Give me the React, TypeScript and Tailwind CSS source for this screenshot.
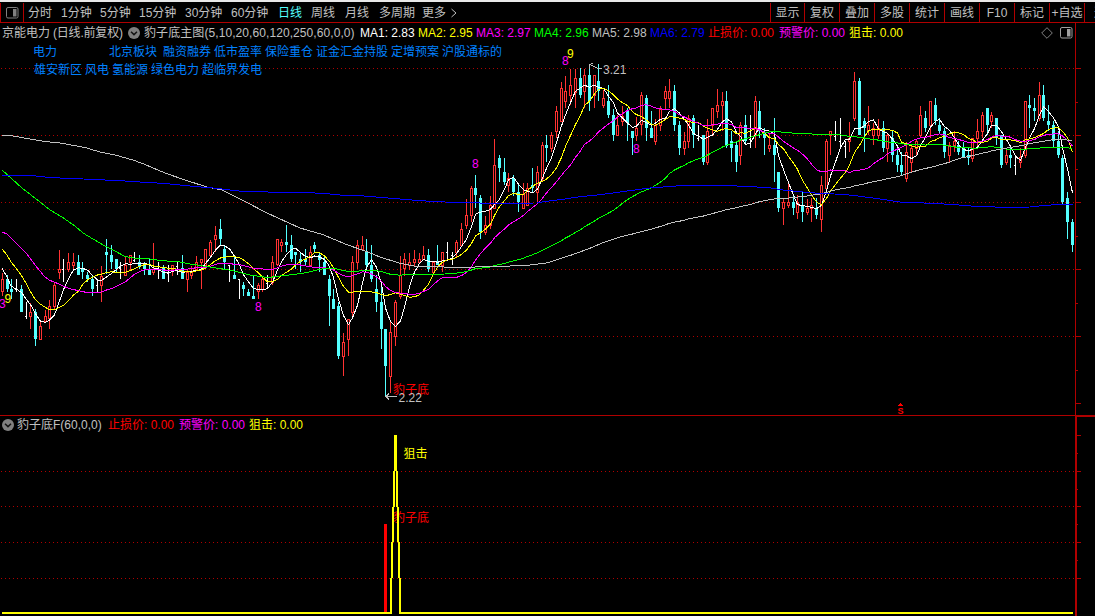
import React from "react";

type Point = [number, number];

// kind (r = rising, c = falling, w = unchanged), high, low, body top, body bottom
const CANDLES = `
r273,296,279,292 c275,292,279,289 c279,299,289,292 w279,292,289,289 c285,312,289,312 w302,319,316,316 r303,329,312,317
c309,346,312,339 r320,340,326,340 r310,322,316,322 r300,329,306,319 r282,309,285,307 r250,279,269,273 w259,282,269,269
r253,272,262,270 r253,270,262,266 c255,275,262,275 c262,279,268,272 c272,282,275,279 c275,296,279,289 w279,292,285,285
r266,302,276,286 c239,274,252,255 c245,269,255,262 c259,272,259,269 w262,279,268,268 r256,276,265,276 r255,271,255,263
w252,262,260,260 c255,269,262,266 c262,275,265,269 c259,275,269,275 r243,275,269,273 w262,279,268,268 c265,279,268,279
w265,282,273,273 r265,276,265,270 w262,275,266,266 c255,279,268,279 r270,292,272,280 r266,279,272,276 r256,271,262,270
r259,289,259,263 r249,269,249,266 r240,256,242,256 r226,252,235,240 c219,245,229,239 c245,269,249,262 w265,282,265,265
c255,279,275,279 w279,299,279,279 c282,296,285,289 c289,296,292,296 c275,299,296,299 r283,299,285,292 r276,292,279,290
w275,288,283,283 r256,285,262,283 r239,266,239,265 r239,252,242,246 c225,252,242,245 c235,262,245,259 c252,269,252,255
c252,272,259,262 c249,265,259,262 r246,266,252,266 c242,252,245,249 c252,272,255,260 c255,275,262,275 c275,326,279,296
c289,309,299,309 c302,359,306,356 r333,376,342,357 r319,356,319,340 r256,316,262,313 r240,269,245,263 r236,251,245,250
c239,269,251,265 c245,282,265,279 c275,312,289,302 c283,349,302,329 c329,396,329,366 r320,393,332,377 r300,346,302,337
r256,299,275,297 r253,276,259,269 r253,270,262,266 r250,267,259,263 r253,264,259,263 r246,260,255,260 c249,272,255,269
r262,274,262,273 c245,265,262,265 r252,272,252,266 w242,260,252,252 w252,265,255,255 r240,257,242,253 r223,246,229,246
r199,229,215,226 r186,222,188,216 c175,208,188,195 c195,239,198,232 r216,235,225,233 r196,229,205,226 r139,209,165,209
c155,182,158,168 c158,185,172,182 r173,192,178,186 c175,196,178,192 c184,212,192,202 r183,209,194,209 r183,206,188,206
c168,192,185,188 r166,202,172,193 r142,182,145,179 c135,162,145,148 r132,152,135,149 r106,138,111,132 r82,122,88,122
r76,108,91,102 r69,105,85,96 r69,108,78,93 c68,98,78,95 r69,108,75,92 c64,111,75,101 r75,108,75,96
c64,101,81,91 r90,108,98,106 c85,118,101,115 c109,141,115,135 r115,136,125,136 r106,126,116,122 c108,141,111,123
c131,155,131,138 r117,141,128,136 r92,135,95,125 c95,141,98,128 c111,138,128,138 r119,145,125,142 r106,131,109,126
r86,109,91,99 r79,108,91,99 c85,131,91,125 c121,155,125,148 r132,155,141,149 r115,148,118,142 c115,148,118,135
w125,141,138,138 c135,165,135,162 r119,165,131,163 r108,135,108,126 r89,118,105,112 r92,131,101,106 c91,148,101,146
c131,162,141,148 c142,172,145,162 r122,165,125,156 c115,144,125,141 w115,148,139,139 r96,148,101,136 c101,138,111,131
c128,155,132,138 r134,152,145,149 c118,182,145,155 c172,212,172,208 r198,225,202,209 r182,208,202,206 c194,215,202,208
r195,219,202,213 c192,222,205,212 r199,215,208,213 r198,222,205,209 c198,219,208,215 r176,232,185,220 r139,192,141,189
r131,155,131,136 w121,141,136,136 w118,147,141,141 w141,158,146,146 r122,152,138,142 r72,121,81,119 c78,135,81,135
c118,152,121,128 r106,135,125,131 r123,145,128,136 r119,139,128,136 c121,152,128,148 r134,162,135,149 c130,162,138,155
c145,172,155,165 c152,175,165,172 r142,182,152,179 r145,172,148,163 r139,155,141,149 r106,137,115,136 c111,132,118,128
r101,138,101,126 c98,125,105,121 c118,134,125,131 c128,158,131,152 r142,162,145,156 r131,152,141,146 c141,155,145,152
c142,157,148,157 c148,165,155,158 r138,162,138,159 r119,149,131,139 r112,138,115,132 c108,135,108,125 r112,128,115,122
c118,145,118,138 c135,168,135,165 r148,165,155,163 c148,168,155,158 w157,175,165,165 r148,168,157,163 r101,158,101,156
c95,128,105,108 c98,121,108,111 r82,121,95,119 c85,121,95,118 c105,131,121,125 c121,148,125,141 c131,158,141,155
c155,204,158,202 c192,239,198,222 c219,252,222,245`
  .trim()
  .split(/\s+/)
  .map((s, i) => {
    const [high, low, top, bottom] = s.slice(1).split(",").map(Number);
    const kind = s[0];
    return { kind, high, low, top, bottom, x: Math.floor(2.4 + i * 4.7345), close: kind === "c" ? bottom - 0.5 : top + 0.3 };
  });

function movingAverage(period: number, lead: Point[]): string {
  const points: Point[] = [...lead];
  for (let i = period - 1; i < CANDLES.length; i++) {
    let sum = 0;
    for (let k = i - period + 1; k <= i; k++) sum += CANDLES[k].close;
    points.push([CANDLES[i].x + 0.5, sum / period + 0.3]);
  }
  return toPoints(points);
}

function toPoints(points: Point[]): string {
  return points.map((p) => p.join(",")).join(" ");
}

const MA5 = movingAverage(5, [[2, 268], [7, 277], [11, 286], [16, 289]]);
const MA10 = movingAverage(10, [[2, 249], [7, 255], [11, 262], [16, 268], [21, 275], [26, 283], [30, 291], [35, 299], [40, 304]]);
const MA20 = movingAverage(20, [
  [2, 232], [7, 234], [11, 238], [16, 243], [21, 248], [26, 253], [30, 258], [35, 265], [40, 271], [44, 276],
  [49, 280], [54, 282], [59, 284], [63, 286], [68, 288], [73, 289.5], [78, 290.5], [82, 291.7], [87, 292.3],
]);
const MA60 = movingAverage(60, [
  [2, 170], [22, 188], [40, 202], [50, 210], [62, 217], [75, 226], [83, 233], [93, 239], [105, 246], [115, 251],
  [125, 256.5], [137, 258.5], [150, 259], [160, 260.5], [180, 262], [190, 264], [200, 265.5], [210, 267],
  [233, 270.7], [250, 275], [267, 277.5], [276, 276.7],
]);
const MA120 = movingAverage(120, [
  [2, 135], [10, 135.5], [30, 139], [45, 141.5], [60, 143], [85, 147.5], [100, 152], [115, 155], [133, 160],
  [145, 164.5], [165, 173], [185, 180], [207, 187], [222, 190], [242, 200], [267, 213], [300, 228], [323, 234.7],
  [347, 244.7], [367, 251.7], [380, 257], [400, 263.3], [417, 266.5], [460, 267.3], [500, 266.5], [530, 265], [548, 262.7],
]);
const MA250 = toPoints([
  [2, 175.5], [33, 175.7], [45, 177], [60, 178], [95, 179.5], [125, 181], [145, 182.3], [165, 183.5], [180, 185],
  [195, 186.5], [213, 188], [230, 190], [245, 191.7], [305, 192.5], [325, 193.5], [340, 195], [360, 195.7],
  [400, 199], [420, 200.7], [445, 202], [487, 203.2], [537, 203], [545, 201.5], [560, 199.7], [580, 196.7],
  [600, 194.7], [620, 192], [650, 188], [680, 185.7], [733, 185.7], [745, 186.7], [767, 187.3], [783, 190],
  [800, 191.7], [820, 193.5], [843, 194.3], [860, 196.3], [880, 199], [900, 202], [940, 203.7], [963, 205.3],
  [975, 206.3], [1003, 207.3], [1030, 207], [1045, 205.3], [1073, 204],
]);

const TOOLBAR = [
  { label: "分时", cls: "w-[33px]" },
  { label: "1分钟", cls: "w-[39px]" },
  { label: "5分钟", cls: "w-[39px]" },
  { label: "15分钟", cls: "w-[46px]" },
  { label: "30分钟", cls: "w-[46px]" },
  { label: "60分钟", cls: "w-[47px]" },
  { label: "日线", cls: "w-[33px] text-[#54ffff]" },
  { label: "周线", cls: "w-[34px]" },
  { label: "月线", cls: "w-[34px]" },
  { label: "多周期", cls: "w-[43px]" },
  { label: "更多", cls: "w-[27px]" },
];

const ACTIONS = ["显示", "复权", "叠加", "多股", "统计", "画线", "F10", "标记", "+自选"];

const READOUTS = [
  { label: "MA1: 2.83", cls: "w-[58px] text-white" },
  { label: "MA2: 2.95", cls: "w-[58px] text-[#ffff00]" },
  { label: "MA3: 2.97", cls: "w-[58px] text-[#ff00ff]" },
  { label: "MA4: 2.96", cls: "w-[58px] text-[#00ff00]" },
  { label: "MA5: 2.98", cls: "w-[58px] text-[#c0c0c0]" },
  { label: "MA6: 2.79", cls: "w-[58px] text-[#0000ff]" },
];

const SIGNALS = [
  { label: "止损价: 0.00", cls: "w-[71px] text-[#ff0000]" },
  { label: "预警价: 0.00", cls: "w-[70px] text-[#ff00ff]" },
  { label: "狙击: 0.00", cls: "text-[#ffff00]" },
];

function PanelIcon({ color }: { color: string }) {
  return (
    <svg width="13" height="12" viewBox="0 0 13 12" className="shrink-0">
      <rect x="0.5" y="0.5" width="11.5" height="10.5" rx="1.5" fill="none" stroke={color} />
      <rect x="7" y="2" width="3.5" height="7.5" fill={color} />
    </svg>
  );
}

function Expander() {
  return (
    <svg width="12" height="12" viewBox="0 0 12 12" className="shrink-0">
      <circle cx="6" cy="6" r="6" fill="#808080" />
      <path d="M3 4.8 L6 7.6 L9 4.8" fill="none" stroke="#141414" strokeWidth="1.5" />
    </svg>
  );
}

function Toolbar() {
  return (
    <nav className="flex h-[21px] shrink-0 border-b border-[#b00000] text-[#c0c0c0]">
      <div className="mt-px flex w-6 shrink-0 items-center justify-center border-x border-[#b00000]">
        <PanelIcon color="#808080" />
      </div>
      <div className="mt-px flex flex-1 items-center pl-1">
        {TOOLBAR.map((t) => (
          <span key={t.label} className={"shrink-0 " + t.cls}>{t.label}</span>
        ))}
        <svg width="8" height="10" viewBox="0 0 8 10" className="ml-px">
          <path d="M1.5 1 L6 5 L1.5 9" fill="none" stroke="#c0c0c0" />
        </svg>
      </div>
      <div className="mt-px flex w-[325px] shrink-0 overflow-hidden">
        {ACTIONS.map((a) => (
          <span key={a} className="flex w-[35px] shrink-0 items-center justify-center border-l border-[#b00000] first:w-[34px]">
            {a}
          </span>
        ))}
        <span className="flex flex-1 items-center overflow-hidden border-l border-[#b00000] pl-[9px]">返</span>
      </div>
    </nav>
  );
}

function Dots({ rows }: { rows: number[] }) {
  return (
    <g fill="none" stroke="#b00000" strokeDasharray="1 3">
      {rows.map((y) => (
        <line key={y} x1="1" x2="1074" y1={y + 0.5} y2={y + 0.5} />
      ))}
    </g>
  );
}

function Ticks({ long, short }: { long: number[]; short: number[] }) {
  return (
    <g fill="#b00000">
      {long.map((y) => <rect key={y} x="1075" y={y} width="6" height="1" />)}
      {short.map((y) => <rect key={y} x="1075" y={y} width="3" height="1" />)}
    </g>
  );
}

function Candles() {
  return (
    <g>
      {CANDLES.map(({ kind, high, low, top, bottom, x }) => {
        if (kind === "w")
          return (
            <g key={x} fill="#ffffff">
              <rect x={x} y={high} width="1" height={low - high} />
              <rect x={x - 1} y={top} width="2" height="1" />
            </g>
          );
        if (kind === "c")
          return (
            <g key={x} fill="#54ffff">
              <rect x={x} y={high} width="1" height={low - high} />
              <rect x={x - 1} y={top} width="3" height={bottom - top} />
            </g>
          );
        return (
          <g key={x} fill="#ff3232">
            <rect x={x} y={high} width="1" height={Math.max(0, top - high)} />
            <rect x={x} y={bottom} width="1" height={Math.max(0, low - bottom)} />
            <rect x={x - 1} y={top} width="3" height={bottom - top} />
            <rect x={x} y={top + 1} width="1" height={Math.max(0, bottom - top - 2)} fill="#000000" />
          </g>
        );
      })}
    </g>
  );
}

function PriceChart() {
  return (
    <svg className="absolute inset-0" width="1095" height="392" viewBox="0 23 1095 392">
      <g shapeRendering="crispEdges">
        <Dots rows={[68, 135, 202, 269, 336]} />
        <rect x="1075" y="23" width="1" height="392" fill="#b00000" />
        <Ticks long={[68, 135, 202, 269, 336, 403]} short={[102, 169, 236, 303, 370]} />
        <Candles />
        <g fill="none" strokeWidth="1">
          <polyline points={MA5} stroke="#ffffff" />
          <polyline points={MA10} stroke="#ffff00" />
          <polyline points={MA20} stroke="#ff00ff" />
          <polyline points={MA60} stroke="#00ff00" />
          <polyline points={MA120} stroke="#c0c0c0" />
          <polyline points={MA250} stroke="#0000ff" />
          <path d="M602 68.5 H598 L594 66.5 L589.5 64.5 M589.5 69 V64.5 L593 63.5" stroke="#c0c0c0" />
          <path d="M397 396.5 H386 M389 393.5 L386 396.5 L389 399.5" stroke="#c0c0c0" />
        </g>
        <path d="M900 403 h1 v1 h1 v1 h1 v1 h-5 v-1 h1 v-1 h1 z" fill="#ff0000" />
      </g>
      <g fontSize="12">
        <text x="603" y="74" fill="#c0c0c0">3.21</text>
        <text x="393" y="394" fill="#ff0000">豹子底</text>
        <text x="398.5" y="402" fill="#c0c0c0">2.22</text>
        <text x="-1" y="308" fill="#ff00ff">3</text>
        <text x="4.5" y="303" fill="#ffff00">9</text>
        <text x="255" y="311" fill="#ff00ff">8</text>
        <text x="472" y="168" fill="#ff00ff">8</text>
        <text x="562" y="65" fill="#ff00ff">8</text>
        <text x="567" y="58" fill="#ffff00">9</text>
        <text x="633" y="153" fill="#ff00ff">8</text>
        <text x="897.5" y="414" fill="#ff0000" fontSize="9" fontWeight="bold">S</text>
      </g>
    </svg>
  );
}

function SignalChart() {
  return (
    <svg className="absolute inset-0" width="1095" height="201" viewBox="0 415 1095 201">
      <g shapeRendering="crispEdges">
        <Dots rows={[471, 506, 542, 578]} />
        <rect x="0" y="415" width="1075" height="1" fill="#b00000" />
        <rect x="1075" y="415" width="20" height="2" fill="#b00000" />
        <rect x="1075" y="415" width="2" height="201" fill="#b00000" />
        <Ticks long={[435, 471, 506, 542, 578]} short={[453, 489, 524, 560]} />
        <rect x="384" y="524" width="3" height="88" fill="#ff0000" />
      </g>
      <text x="393" y="522" fontSize="12" fill="#ff0000">豹子底</text>
      <g shapeRendering="crispEdges" fill="none" stroke="#ffff00" strokeWidth="2">
        <path d="M2 613 H391 V578 M392 578 V542 M393 542 V507 M394 507 V471" />
        <path d="M397 471 V507 M398 507 V542 M399 542 V578 M400 578 V613 H1073" />
        <rect x="394" y="435" width="3" height="36" fill="#ffff00" stroke="none" />
      </g>
      <text x="403.5" y="458" fontSize="12" fill="#ffff00">狙击</text>
    </svg>
  );
}

export default function App() {
  return (
    <div className="flex h-[616px] w-[1095px] flex-col overflow-hidden whitespace-pre bg-black font-['Liberation_Sans','Noto_Sans_CJK_SC',sans-serif] text-[12px] leading-[18px]">
      <div className="h-0.5 shrink-0 bg-[#e8e8e8]" />
      <Toolbar />
      <section className="relative h-[392px] shrink-0 pt-px">
        <PriceChart />
        <header className="relative flex h-[18px] items-center pl-0.5">
          <span className="w-[51px] shrink-0 text-[#c0c0c0]">京能电力</span>
          <span className="w-[75px] shrink-0 tracking-[-0.2px] text-[#c0c0c0]">(日线.前复权)</span>
          <Expander />
          <span className="ml-1 w-[216px] shrink-0 tracking-[0.08px] text-[#c0c0c0]">豹子底主图(5,10,20,60,120,250,60,0,0)</span>
          {[...READOUTS, ...SIGNALS].map((r) => (
            <span key={r.label} className={"shrink-0 " + r.cls}>{r.label}</span>
          ))}
          <div className="ml-auto flex items-center gap-[7px] pr-[22px]">
            <svg width="12" height="12" viewBox="0 0 12 12">
              <path d="M6 0.7 L11.3 6 L6 11.3 L0.7 6 Z" fill="none" stroke="#808080" />
            </svg>
            <PanelIcon color="#a0a0a0" />
          </div>
        </header>
        <div className="relative mt-px flex h-[18px] items-center gap-1 pl-[33px] text-[#0080ff]">
          <span className="w-[72px]">电力</span>
          <span className="mr-0.5">北京板块</span>
          <span className="-mr-px">融资融券</span>
          <span className="-mr-px">低市盈率</span>
          <span className="-mr-px">保险重仓</span>
          <span className="-mr-px">证金汇金持股</span>
          <span className="-mr-px">定增预案</span>
          <span>沪股通标的</span>
        </div>
        <div className="relative flex h-[18px] items-center gap-[3px] pl-[34px] text-[#0080ff]">
          {["雄安新区", "风电", "氢能源", "绿色电力", "超临界发电"].map((t) => (
            <span key={t}>{t}</span>
          ))}
        </div>
      </section>
      <section className="relative h-[201px] shrink-0 pt-px">
        <SignalChart />
        <header className="relative flex h-[18px] items-center pl-0.5">
          <Expander />
          <span className="ml-[3px] w-[91px] shrink-0 text-[#c0c0c0]">豹子底F(60,0,0)</span>
          {SIGNALS.map((r) => (
            <span key={r.label} className={"shrink-0 " + r.cls}>{r.label}</span>
          ))}
        </header>
      </section>
    </div>
  );
}
